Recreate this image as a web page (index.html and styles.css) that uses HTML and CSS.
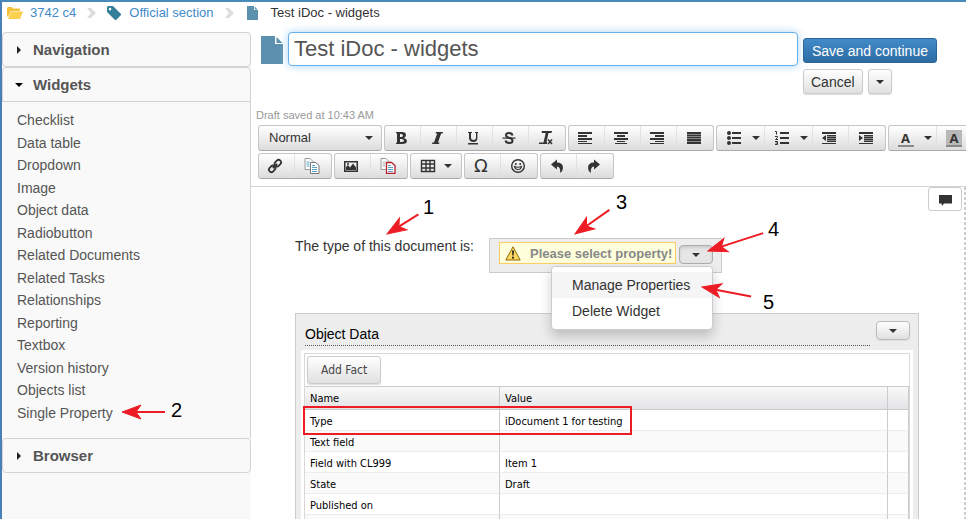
FILE: index.html
```html
<!DOCTYPE html>
<html lang="en">
<head>
<meta charset="utf-8">
<title>Test iDoc - widgets</title>
<link rel="stylesheet" href="styles.css">
</head>
<body>
<svg class="defs" aria-hidden="true">
  <defs>
    <symbol id="caret" viewBox="0 0 8 4"><path d="M0 0h8L4 4z"/></symbol>
    <symbol id="chevron" viewBox="0 0 9 10"><path d="M0 0h4l5 5-5 5H0l4-5z"/></symbol>
    <symbol id="page" viewBox="0 0 22 28"><path d="M0 0h14v8h8v20H0zM15.500 1L21.500 7h-6z"/></symbol>
  </defs>
</svg>
<div class="app">
  <nav class="crumbs" aria-label="Breadcrumb">
    <svg class="i-folder" viewBox="0 0 16 12"><path d="M0 1l1-1h4l1 1.500h7V4H4L1 10 0 9z" fill="#f3c13c"/><path d="M4 4.500h12L13 12H1z" fill="#fbd04f"/></svg>
    <a href="#">3742 c4</a>
    <svg class="i-chevron"><use href="#chevron"/></svg>
    <svg class="i-tag" viewBox="0 0 14 14"><path fill="#34809b" fill-rule="evenodd" d="M0 1l1-1h5l8 8v1l-5 5H8L0 6zM3 1.800a1.300 1.300 0 1 0 .1 0z"/></svg>
    <a href="#">Official section</a>
    <svg class="i-chevron"><use href="#chevron"/></svg>
    <svg class="i-page-small"><use href="#page"/></svg>
    <span>Test iDoc - widgets</span>
  </nav>
  <div class="columns">
    <aside class="sidebar">
      <button class="panel-head" type="button"><svg class="tri" viewBox="0 0 4 8"><path d="M0 0l4 4-4 4z"/></svg>Navigation</button>
      <section class="panel">
        <button class="panel-head open" type="button"><svg class="tri" viewBox="0 0 8 4"><path d="M0 0h8L4 4z"/></svg>Widgets</button>
        <ul class="widgets">
          <li>Checklist</li><li>Data table</li><li>Dropdown</li><li>Image</li><li>Object data</li><li>Radiobutton</li><li>Related Documents</li><li>Related Tasks</li><li>Relationships</li><li>Reporting</li><li>Textbox</li><li>Version history</li><li>Objects list</li><li>Single Property</li>
        </ul>
      </section>
      <button class="panel-head" type="button"><svg class="tri" viewBox="0 0 4 8"><path d="M0 0l4 4-4 4z"/></svg>Browser</button>
    </aside>
    <main class="main">
      <header class="title-row">
        <svg class="i-page"><use href="#page"/></svg>
        <input class="title-input" type="text" aria-label="Title" value="Test iDoc - widgets">
        <div class="actions">
          <button class="btn primary" type="button">Save and continue</button>
          <button class="btn" type="button">Cancel</button>
          <button class="btn" type="button" aria-label="More"><svg class="i-caret"><use href="#caret"/></svg></button>
        </div>
      </header>
      <div class="toolbar">
        <p class="saved">Draft saved at 10:43 AM</p>
        <div class="tool-row">
          <div class="group format">
            <select aria-label="Format"><option>Normal</option></select>
            <svg class="i-caret"><use href="#caret"/></svg>
          </div>
          <div class="group">
            <button type="button" aria-label="Bold"><svg viewBox="0 0 16 16"><path fill-rule="evenodd" d="M3 2h6q4 0 4 3 0 2-2 3 3 1 3 3 0 3-5 3H3v-1l1-.5v-9L3 3zM7 4v3h1q2 0 2-1.500T8 4zM7 9v3h1.500Q11 12 11 10.500T8.500 9z"/></svg></button>
            <button type="button" aria-label="Italic"><svg viewBox="0 0 16 16"><path d="M7 2h7l-.4 1.500h-1.500L9 12.500h1.500L10 14H3l.4-1.500H5L8.200 3.500H6.600z"/></svg></button>
            <button type="button" aria-label="Underline"><svg viewBox="0 0 16 16"><path d="M3 2h4v1H6v5q0 2 2.500 2T11 8V3h-1V2h3v1h-.6v5q0 4-4 4T4 8V3H3zM3 13h10v1.500H3z"/></svg></button>
            <button type="button" aria-label="Strikethrough"><svg viewBox="0 0 16 16"><path d="M11.500 5.500Q11 3 8 3 5 3 5 5.300 5 7 8 7.800q3.500.8 3.500 3Q11.500 13 8.300 13 5 13 4.500 10.500" fill="none" stroke="#333" stroke-width="2"/><path d="M1.500 7.500h13v1.200h-13z"/></svg></button>
            <button type="button" aria-label="Remove format"><svg viewBox="0 0 16 16"><path d="M4 1h10l-.5 2h-3L8.500 12H9v2H1v-1.500h4.500L7.700 3H3.500z"/><path d="M10 9.500l4 4.500m0-4.500L10 14" stroke="#333" stroke-width="1.500"/></svg></button>
          </div>
          <div class="group">
            <button type="button" aria-label="Align left"><svg viewBox="0 0 16 16"><path d="M1 2h14v2H1zM1 5h9v2H1zM1 8h14v2H1zM1 11h9v1H1zM1 13h14v1H1z"/></svg></button>
            <button type="button" aria-label="Center"><svg viewBox="0 0 16 16"><path d="M1 2h14v2H1zM4 5h8v2H4zM1 8h14v2H1zM4 11h8v1H4zM2 13h12v1H2z"/></svg></button>
            <button type="button" aria-label="Align right"><svg viewBox="0 0 16 16"><path d="M1 2h14v2H1zM6 5h9v2H6zM1 8h14v2H1zM6 11h9v1H6zM1 13h14v1H1z"/></svg></button>
            <button type="button" aria-label="Justify"><svg viewBox="0 0 16 16"><path fill="#888" d="M1 2h14v12H1z"/><path d="M1 2h14v2H1zM1 5h14v1H1zM1 7h14v1H1zM1 9h14v2H1zM1 12h14v2H1z"/></svg></button>
          </div>
          <div class="group">
            <button class="wide" type="button" aria-label="Bulleted list"><svg viewBox="0 0 16 16"><circle cx="3" cy="3" r="2"/><circle cx="3" cy="8" r="2"/><circle cx="3" cy="13" r="2"/><path d="M6 2h9v2H6zM6 7h9v2H6zM6 12h9v2H6z"/></svg><svg class="i-caret"><use href="#caret"/></svg></button>
            <button class="wide" type="button" aria-label="Numbered list"><svg viewBox="0 0 16 16"><path d="M1 1.500h1.500v3M1 6.500h2.500v1L1.500 9.500h2.500M1 11.500h2.500v3H1M1.500 13h2" fill="none" stroke="#333"/><path d="M6 2h9v2H6zM6 7h9v2H6zM6 12h9v2H6z"/></svg><svg class="i-caret"><use href="#caret"/></svg></button>
            <button type="button" aria-label="Outdent"><svg viewBox="0 0 16 16"><path fill="#888" d="M6 5h9v7H6z"/><path d="M1 2h14v2H1zM6 5h9v1H6zM6 7h9v1H6zM6 9h9v1H6zM6 11h9v1H6zM1 13h14v1H1zM1 8l4-3v6z"/></svg></button>
            <button type="button" aria-label="Indent"><svg viewBox="0 0 16 16"><path fill="#888" d="M6 5h9v7H6z"/><path d="M1 2h14v2H1zM6 5h9v1H6zM6 7h9v1H6zM6 9h9v1H6zM6 11h9v1H6zM1 13h14v1H1zM5 8L1 5v6z"/></svg></button>
          </div>
          <div class="group">
            <button class="wide" type="button"><span class="letter">A</span><svg class="i-caret"><use href="#caret"/></svg></button>
            <button class="wide" type="button"><span class="letter filled">A</span><svg class="i-caret"><use href="#caret"/></svg></button>
          </div>
        </div>
        <div class="tool-row">
          <div class="group">
            <button type="button" aria-label="Link"><svg viewBox="0 0 16 16"><g transform="rotate(-45 8 8)" fill="none" stroke="#333" stroke-width="1.800"><rect x="0.500" y="5.500" width="7" height="5" rx="2.500"/><rect x="8.500" y="5.500" width="7" height="5" rx="2.500"/><path d="M5 8h6"/></g></svg></button>
            <button type="button" aria-label="Copy document"><svg viewBox="0 0 16 16"><path d="M1 .5h5l3 3v8H1z" fill="#fff" stroke="#999"/><path d="M2.500 4h3M2.500 6h3M2.500 8h3" stroke="#5aa0c8"/><path d="M6.500 4.500h5l3.500 3v8H6.500z" fill="#fff" stroke="#777"/><path d="M8 7.500h3M8 9.500h5M8 11.500h5M8 13.500h5" stroke="#5aa0c8"/></svg></button>
          </div>
          <div class="group">
            <button type="button" aria-label="Image"><svg viewBox="0 0 16 16"><path fill-rule="evenodd" d="M1 3h14v11H1zM2.500 4.500v8h11v-8z"/><path d="M3 12V9l2-2 2 2.500 3-4 3 4V12z"/><circle cx="5" cy="6" r="1"/></svg></button>
            <button type="button" aria-label="Compare document"><svg viewBox="0 0 16 16"><path d="M1 .5h5l3 3v8H1z" fill="#fff" stroke="#999"/><path d="M2.500 4h3M2.500 6h3M2.500 8h3" stroke="#aaa"/><path d="M6.500 4.500h5l3.500 3v8H6.500z" fill="#fff" stroke="#b8232f" stroke-width="1.300"/><path d="M8 7.500h3M8 9.500h5M8 11.500h5M8 13.500h5" stroke="#5aa0c8"/></svg></button>
          </div>
          <div class="group">
            <button class="wide" type="button" aria-label="Table"><svg viewBox="0 0 16 16"><path d="M1.500 2.500h13v11h-13zM1.500 6h13M1.500 10h13M6 2.500v11M10 2.500v11" fill="none" stroke="#333" stroke-width="1.400"/></svg><svg class="i-caret"><use href="#caret"/></svg></button>
          </div>
          <div class="group">
            <button type="button" aria-label="Special character"><span class="omega">Ω</span></button>
            <button type="button" aria-label="Smiley"><svg viewBox="0 0 16 16"><circle cx="8" cy="8" r="6.300" fill="none" stroke="#333" stroke-width="1.400"/><circle cx="5.800" cy="6" r="1"/><circle cx="10.200" cy="6" r="1"/><path d="M4.500 8.500q3.500 1.500 7 0-.5 3-3.500 3t-3.500-3z" fill="none" stroke="#333" stroke-width="1.200"/></svg></button>
          </div>
          <div class="group">
            <button type="button" aria-label="Undo"><svg viewBox="0 0 16 16"><path d="M2 6.500l6-5v3q6 0 6 5.500 0 3-3 5 1-6-3-6.500v3z"/></svg></button>
            <button type="button" aria-label="Redo"><svg viewBox="0 0 16 16"><path d="M14 6.500l-6-5v3q-6 0-6 5.500 0 3 3 5-1-6 3-6.500v3z"/></svg></button>
          </div>
        </div>
      </div>
      <div class="document">
        <button class="comment" type="button" aria-label="Comments"><svg viewBox="0 0 13 11"><path d="M0 0h13v8.500H5L3 11 2.500 8.500H0z"/></svg></button>
        <div class="paper">
          <div class="sentence">
            <p>The type of this document is:</p>
            <div class="property">
              <div class="warning">
                <svg viewBox="0 0 16 15"><path d="M8 .8L15.200 14H.8z" fill="#fcd95b" stroke="#8e6a12" stroke-linejoin="round"/><path d="M7 4.500h2l-.4 5H7.400zM7 10.800h2v1.800H7z" fill="#222"/></svg>
                Please select property!
              </div>
              <button class="btn mini pressed" type="button" aria-label="Widget menu"><svg class="i-caret"><use href="#caret"/></svg></button>
              <div class="menu">
                <button class="active" type="button">Manage Properties</button>
                <button type="button">Delete Widget</button>
              </div>
            </div>
          </div>
          <section class="object">
            <header class="object-head">
              <h2>Object Data</h2>
              <button class="btn mini" type="button" aria-label="Object data menu"><svg class="i-caret"><use href="#caret"/></svg></button>
            </header>
            <div class="object-body">
              <div class="grid-box">
                <button class="btn fact" type="button">Add Fact</button>
                <table>
                  <colgroup><col class="c-name"><col><col class="c-end"></colgroup>
                  <thead><tr><th>Name</th><th>Value</th><th></th></tr></thead>
                  <tbody>
                    <tr><td>Type</td><td>iDocument 1 for testing</td><td></td></tr>
                    <tr><td>Text field</td><td></td><td></td></tr>
                    <tr><td>Field with CL999</td><td>Item 1</td><td></td></tr>
                    <tr><td>State</td><td>Draft</td><td></td></tr>
                    <tr><td>Published on</td><td></td><td></td></tr>
                    <tr><td></td><td></td><td></td></tr>
                  </tbody>
                </table>
              </div>
            </div>
          </section>
        </div>
      </div>
    </main>
  </div>
  <svg class="notes" width="966" height="519">
    <rect x="304" y="407" width="327" height="27" fill="none" stroke="#ed1c24" stroke-width="2"/>
    <g class="arrows">
      <g transform="translate(387 234) rotate(-32)"><path d="M0 0L19-7 14 0l5 7z"/><path d="M14 0h23"/></g>
      <g transform="translate(122 412)"><path d="M0 0L19-7 14 0l5 7z"/><path d="M14 0h29"/></g>
      <g transform="translate(575 234) rotate(-35)"><path d="M0 0L19-7 14 0l5 7z"/><path d="M14 0h28"/></g>
      <g transform="translate(708 251) rotate(-18)"><path d="M0 0L19-7 14 0l5 7z"/><path d="M14 0h44"/></g>
      <g transform="translate(702 287) rotate(11)"><path d="M0 0L19-7 14 0l5 7z"/><path d="M14 0h36"/></g>
    </g>
    <text x="423" y="214">1</text><text x="171" y="417">2</text><text x="616" y="209">3</text><text x="768" y="236">4</text><text x="763" y="309">5</text>
  </svg>
</div>
</body>
</html>
```
FILE: styles.css
```css
* { box-sizing: border-box; }
body { margin: 0; font: 14px/20px "Liberation Sans", Arial, sans-serif; color: #333; background: #fff; }
button, input, select { font: inherit; color: inherit; margin: 0; }
p, h2, ul { margin: 0; padding: 0; }
svg { display: block; flex: none; }
.defs { position: absolute; width: 0; height: 0; }
.app { position: relative; height: 100vh; overflow: hidden; display: flex; flex-direction: column; border-top: 2px solid #4a8abb; border-left: 2px solid #4a80b8; }

.crumbs { display: flex; align-items: center; height: 30px; padding: 0 0 8px 5px; font-size: 13px; }
.crumbs a { color: #428bca; text-decoration: none; }
.i-folder { width: 16px; height: 12px; margin-right: 7px; }
.i-chevron { width: 9px; height: 10px; margin: 0 11px; fill: #ddd; }
.i-tag { width: 14px; height: 14px; margin-right: 8px; }
.i-page-small { width: 11px; height: 14px; margin: 0 13px 0 2px; fill: #5b90af; }
.i-caret { width: 8px; height: 4px; fill: #333; }

.columns { display: flex; flex: 1; min-height: 0; }
.sidebar { flex: 0 0 249px; background: #f9f9f9; }
.panel-head { display: flex; align-items: center; gap: 12px; width: 100%; height: 35px; padding: 0 14px; border: 1px solid #d3d3d3; border-radius: 4px; background: #f9f9f9; color: #555; font-size: 15px; font-weight: bold; }
.panel-head.open { border-radius: 4px 4px 0 0; padding-left: 12px; gap: 10px; }
.tri { width: 4px; height: 8px; fill: #222; }
.open .tri { width: 8px; height: 4px; fill: #000; }
.widgets { display: flex; flex-direction: column; justify-content: space-between; height: 336px; padding: 8px 15px 15px; border-right: 1px solid #d3d3d3; list-style: none; color: #555; }

.main { flex: 1; min-width: 0; display: flex; flex-direction: column; }
.title-row { display: flex; align-items: flex-start; gap: 5px; padding-left: 10px; height: 75px; }
.i-page { width: 22px; height: 28px; margin-top: 4px; fill: #5b90af; }
.title-input { flex: 1; min-width: 0; height: 34px; padding: 0 5px; border: 1px solid #66afe9; border-radius: 4px; box-shadow: 0 0 8px #a8d4f5; background: #fff; color: #555; font-size: 22px; outline: none; }
.actions { flex: 0 0 163px; display: flex; flex-wrap: wrap; gap: 6px 5px; padding-top: 6px; }
.btn { display: flex; align-items: center; justify-content: center; height: 25px; padding: 0 7px; border: 1px solid #ccc; border-radius: 3px; background: linear-gradient(#fff, #e0e0e0); box-shadow: 0 1px 1px #ddd; }
.btn.primary { padding: 0 8px; border-color: #2b669a; background: linear-gradient(#428bca, #2d6ca2); color: #fff; box-shadow: none; }
.btn.mini { width: 34px; height: 19px; border-color: #bbb; border-radius: 4px; }
.btn.mini.pressed { border-color: #adadad; background: #e6e6e6; box-shadow: inset 0 2px 3px #ccc; }

.toolbar { height: 80px; padding: 0 0 0 7px; border-bottom: 1px solid #d3d3d3; overflow: hidden; }
.saved { height: 18px; margin-left: -2px; font-size: 11px; line-height: 16px; color: #999; }
.tool-row { display: flex; gap: 2px; margin-bottom: 2px; }
.group { display: flex; flex: none; height: 26px; border: 1px solid #c6c6c6; border-bottom-color: #aaa; border-radius: 3px; background: linear-gradient(#fff, #dcdcdc); }
.group button { display: flex; align-items: center; justify-content: center; width: 36px; padding: 0 3px 0 0; border: 0; border-right: 1px solid #e2e2e2; background: none; }
.group button:last-child { border-right: 0; }
.group button.wide { width: 48px; padding: 0 0 0 4px; gap: 10px; }
.group button.wide:only-child { width: 50px; padding: 0; gap: 8px; }
.group button svg:not(.i-caret) { width: 16px; height: 16px; fill: #333; }
.format { align-items: center; width: 124px; padding-right: 8px; }
.format select { flex: 1; height: 24px; padding: 0 0 0 10px; border: 0; outline: 0; background: none; appearance: none; font-size: 13px; }
.letter { width: 16px; height: 17px; border-bottom: 2px solid #888; font: bold 13px/16px "Open Sans", sans-serif; }
.letter.filled { background: #b8b8b8; }
.omega { font: 18px/20px "DejaVu Sans", sans-serif; }

.document { position: relative; flex: 1; min-height: 0; padding-right: 2px; background: repeating-linear-gradient(#ccc 0 3px, #fff 3px 5px) right / 2px 100% no-repeat; }
.comment { position: absolute; top: 0; right: 4px; display: flex; align-items: center; justify-content: center; width: 34px; height: 24px; padding: 2px 0 0; border: 1px solid #ccc; border-radius: 3px; background: #fff; }
.comment svg { width: 13px; height: 11px; fill: #333; }
.paper { padding: 51px 45px 0 44px; }
.sentence { display: flex; align-items: flex-start; gap: 15px; height: 75px; line-height: 17px; }
.property { position: relative; display: flex; gap: 3px; height: 35px; padding: 3px 8px 0 9px; border: 1px solid #ccc; background: #ededed; }
.property .btn { margin-top: 3px; }
.warning { display: flex; align-items: center; gap: 9px; width: 177px; height: 22px; padding: 0 0 0 5px; border: 1px solid #fc6; background: #ffffdc; color: #888; font-size: 13px; font-weight: bold; white-space: nowrap; }
.warning svg { width: 16px; height: 15px; }
.menu { position: absolute; top: 27px; right: 8px; z-index: 2; width: 162px; padding: 5px 0; border: 1px solid #ccc; border-radius: 4px; background: #fff; box-shadow: 0 6px 12px #0003; }
.menu button { display: block; width: 100%; padding: 3px 20px; border: 0; background: #fff; text-align: left; line-height: 20px; white-space: nowrap; }
.menu button.active { background: #f5f5f5; }

.object { padding: 0 5px; border: 1px solid #ccc; background: #ededed; color: #000; }
.object-head { display: flex; align-items: flex-start; gap: 6px; height: 36px; padding: 7px 3px 0 4px; }
.object-head h2 { flex: 1; height: 25px; border-bottom: 1px dotted #555; font-size: 14px; font-weight: normal; line-height: 26px; }
.object-body { padding: 3px 3px 0; background: #fff; font: 11px/16px "DejaVu Sans Condensed", "DejaVu Sans", sans-serif; }
.grid-box { border: 1px solid #d8d8d8; }
.fact { height: 28px; margin: 2px; padding: 0 13px; font-size: 12px; color: #444; }
table { width: 100%; table-layout: fixed; border-collapse: separate; border-spacing: 0; }
.c-name { width: 195px; }
.c-end { width: 21px; }
th { height: 24px; padding: 1px 5px 0; border: solid #ccc; border-width: 1px 1px 1px 0; background: linear-gradient(#f9f9f9, #e2e3e5); font-weight: normal; text-align: left; }
td { height: 21px; padding: 3px 5px 0; border-right: 1px solid #ccc; border-bottom: 1px solid #ededed; }
tbody tr:nth-child(even) { background: #fafafa; }

.notes { position: absolute; top: -2px; left: -2px; z-index: 3; pointer-events: none; font: 20px "Liberation Sans", sans-serif; fill: #000; }
.arrows { fill: #ed1c24; stroke: #ed1c24; stroke-width: 1; }
.arrows path + path { stroke-width: 2; }
```
